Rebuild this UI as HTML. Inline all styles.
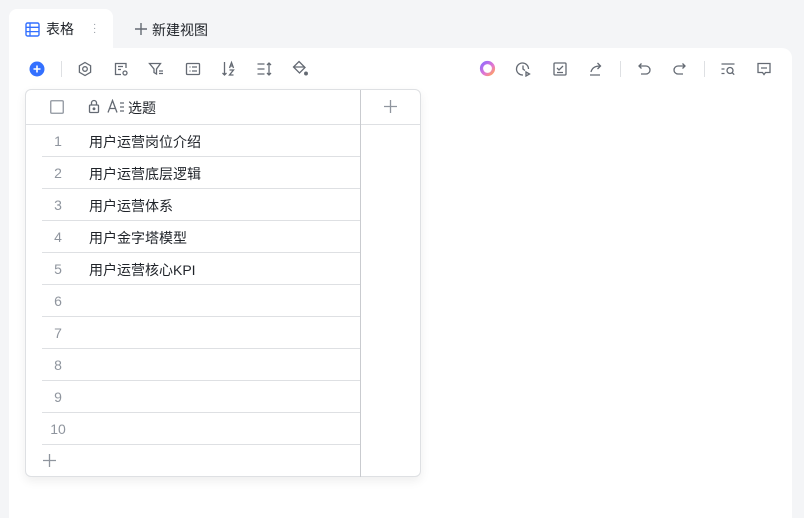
<!DOCTYPE html>
<html><head><meta charset="utf-8"><style>
*{margin:0;padding:0;box-sizing:border-box}
body{width:804px;height:513px;background:#f4f5f7;font-family:"Liberation Sans","Noto Sans CJK SC",sans-serif;position:relative;overflow:hidden;color:#1f2329}
.tab{position:absolute;left:9px;top:9px;width:104px;height:44px;background:#fff;border-radius:8px 8px 0 0}
.panel{position:absolute;left:9px;top:48px;width:783px;height:470px;background:#fff;border-radius:0 10px 0 0}
.abs{position:absolute}
.t{font-size:14px;position:absolute;line-height:20px}
.ic{position:absolute;stroke:#646a73;fill:none;stroke-width:1.3}
.table{position:absolute;left:25px;top:89px;width:396px;height:388px;border:1px solid #dee0e3;border-radius:6px;background:#fff;box-shadow:0 4px 10px rgba(0,0,0,.07)}
.hl{position:absolute;height:1px;background:#dee0e3}
.num{position:absolute;left:44px;width:28px;text-align:center;font-size:14px;color:#8f959e;line-height:32px;height:32px}
.cell{position:absolute;left:89px;font-size:14px;color:#1f2329;line-height:32px;height:32px}
</style></head><body>
<div class="tab"></div>
<div class="panel"></div>
<svg class="abs" style="left:25px;top:22px" width="15" height="15" viewBox="0 0 15 15"><rect x="1" y="1" width="13" height="13" rx="1.5" fill="none" stroke="#3370ff" stroke-width="1.4"/><path d="M1 5.3h13M1 9.6h13M5 1v13" stroke="#3370ff" stroke-width="1.3"/></svg>
<div class="t" style="left:46px;top:19px">表格</div>
<div class="abs" style="left:93px;top:23px;width:2px;height:12px;color:#8f959e;font-size:10px;line-height:4px">·<br>·<br>·</div>
<svg class="abs" style="left:134px;top:22px" width="14" height="14"><path d="M7 1v12M1 7h12" stroke="#646a73" stroke-width="1.4"/></svg>
<div class="t" style="left:152px;top:20px">新建视图</div>

<svg class="abs" style="left:29px;top:61px" width="16" height="16"><circle cx="8" cy="8" r="7.5" fill="#3370ff"/><path d="M8 4.5v7M4.5 8h7" stroke="#fff" stroke-width="1.6"/></svg>
<div class="abs" style="left:61px;top:61px;width:1px;height:16px;background:#dee0e3"></div>
<svg class="ic" style="left:77px;top:61px" width="16" height="16"><circle cx="8" cy="8" r="2.3"/><path d="M8 1.5l5.6 3.25v6.5L8 14.5l-5.6-3.25v-6.5z"/></svg>
<svg class="ic" style="left:113px;top:61px" width="16" height="16"><path d="M13 7V2.5H2.5v11H8M5 5.5h5M5 8.5h3"/><circle cx="12" cy="12" r="2"/></svg>
<svg class="ic" style="left:148px;top:61px" width="17" height="16"><path d="M1.5 2.5h11L8.5 8v5L6 11.5V8z M11 10h4M11 12.5h4"/></svg>
<svg class="ic" style="left:185px;top:61px" width="16" height="16"><rect x="1.5" y="2.5" width="13" height="11" rx="1"/><path d="M4.5 6h1M7 6h5M4.5 10h1M7 10h5"/></svg>
<svg class="ic" style="left:221px;top:60px" width="16" height="17"><path d="M3.5 2v13M1.5 13l2 2 2-2M8.5 8l2-5.5 2 5.5M9.3 6h2.4M8.5 10h4l-4 5h4"/></svg>
<svg class="ic" style="left:256px;top:61px" width="17" height="16"><path d="M1.5 3h7M1.5 8h7M1.5 13h7M13 2v12M11 4l2-2 2 2M11 12l2 2 2-2"/></svg>
<svg class="ic" style="left:292px;top:60px" width="17" height="17"><path d="M7 1.5l6 6-5.5 5.5-6-6z M2 7h11"/><circle cx="14" cy="13.5" r="1.3" fill="#646a73"/></svg>

<svg class="abs" style="left:479px;top:60px" width="17" height="17"><defs><linearGradient id="g" x1="0" y1="0" x2="1" y2="1"><stop offset="0" stop-color="#8f6bff"/><stop offset=".6" stop-color="#e577d0"/><stop offset="1" stop-color="#ffa45c"/></linearGradient></defs><circle cx="8.5" cy="8.5" r="6" fill="none" stroke="url(#g)" stroke-width="3.2"/></svg>
<svg class="ic" style="left:515px;top:61px" width="16" height="16"><path d="M13.5 8A6 6 0 1 0 8 14M8 4.5V8l2 1.5M11 11l3.5 2-3.5 2z"/></svg>
<svg class="ic" style="left:552px;top:61px" width="16" height="16"><rect x="2" y="2" width="12" height="12" rx="1"/><path d="M5 7l2 2 4-4M5 11.5h6"/></svg>
<svg class="ic" style="left:588px;top:61px" width="16" height="16"><path d="M2 14h10M3 11c1-4 4-6 9-6M9.5 2l3 3-3 3"/></svg>
<div class="abs" style="left:620px;top:61px;width:1px;height:16px;background:#dee0e3"></div>
<svg class="ic" style="left:636px;top:61px" width="16" height="16"><path d="M3 5h7a4 4 0 0 1 0 8H5M5.5 2.5L3 5l2.5 2.5"/></svg>
<svg class="ic" style="left:672px;top:61px" width="16" height="16"><path d="M13 5H6a4 4 0 0 0 0 8h5M10.5 2.5L13 5l-2.5 2.5"/></svg>
<div class="abs" style="left:704px;top:61px;width:1px;height:16px;background:#dee0e3"></div>
<svg class="ic" style="left:720px;top:61px" width="17" height="16"><path d="M1.5 3h13M1.5 8h3M1.5 12.5h3"/><circle cx="10" cy="9.5" r="3"/><path d="M12.2 11.7l2 2"/></svg>
<svg class="ic" style="left:756px;top:61px" width="16" height="16"><path d="M2 2.5h12v9H9.5L8 13.5 6.5 11.5H2z M5 7h6"/></svg>

<div class="table">
<div class="hl" style="left:0;top:34px;width:395px"></div>
<div class="abs" style="left:334px;top:0;width:1px;height:387px;background:#c9cbcf"></div>
</div>
<svg class="abs" style="left:50px;top:100px" width="14" height="14"><rect x="0.75" y="0.75" width="12.5" height="12.5" rx="1" fill="none" stroke="#8f959e" stroke-width="1.3"/></svg>
<svg class="ic" style="left:88px;top:99px" width="12" height="15"><rect x="1.5" y="6" width="9" height="7.5" rx="1"/><path d="M3.5 6V4a2.5 2.5 0 0 1 5 0v2"/><circle cx="6" cy="9.8" r=".8" fill="#646a73"/></svg>
<svg class="ic" style="left:107px;top:99px" width="20" height="15"><path d="M1 13.5L5.5 1.5 10 13.5M2.7 9.5h5.6M13 4h4M13 8h4M13 12h4"/></svg>
<div class="cell" style="top:92px;left:128px">选题</div>
<svg class="abs" style="left:383px;top:99px" width="15" height="15"><path d="M7.5 1v13M1 7.5h13" stroke="#8f959e" stroke-width="1.3"/></svg>

<div class="hl" style="left:42px;top:156px;width:318px"></div>
<div class="hl" style="left:42px;top:188px;width:318px"></div>
<div class="hl" style="left:42px;top:220px;width:318px"></div>
<div class="hl" style="left:42px;top:252px;width:318px"></div>
<div class="hl" style="left:42px;top:284px;width:318px"></div>
<div class="hl" style="left:42px;top:316px;width:318px"></div>
<div class="hl" style="left:42px;top:348px;width:318px"></div>
<div class="hl" style="left:42px;top:380px;width:318px"></div>
<div class="hl" style="left:42px;top:412px;width:318px"></div>
<div class="hl" style="left:42px;top:444px;width:318px"></div>

<div class="num" style="top:125px">1</div><div class="cell" style="top:126px">用户运营岗位介绍</div>
<div class="num" style="top:157px">2</div><div class="cell" style="top:158px">用户运营底层逻辑</div>
<div class="num" style="top:189px">3</div><div class="cell" style="top:190px">用户运营体系</div>
<div class="num" style="top:221px">4</div><div class="cell" style="top:222px">用户金字塔模型</div>
<div class="num" style="top:253px">5</div><div class="cell" style="top:254px">用户运营核心KPI</div>
<div class="num" style="top:285px">6</div>
<div class="num" style="top:317px">7</div>
<div class="num" style="top:349px">8</div>
<div class="num" style="top:381px">9</div>
<div class="num" style="top:413px">10</div>
<svg class="abs" style="left:42px;top:453px" width="15" height="15"><path d="M7.5 1v13M1 7.5h13" stroke="#8f959e" stroke-width="1.3"/></svg>
</body></html>
